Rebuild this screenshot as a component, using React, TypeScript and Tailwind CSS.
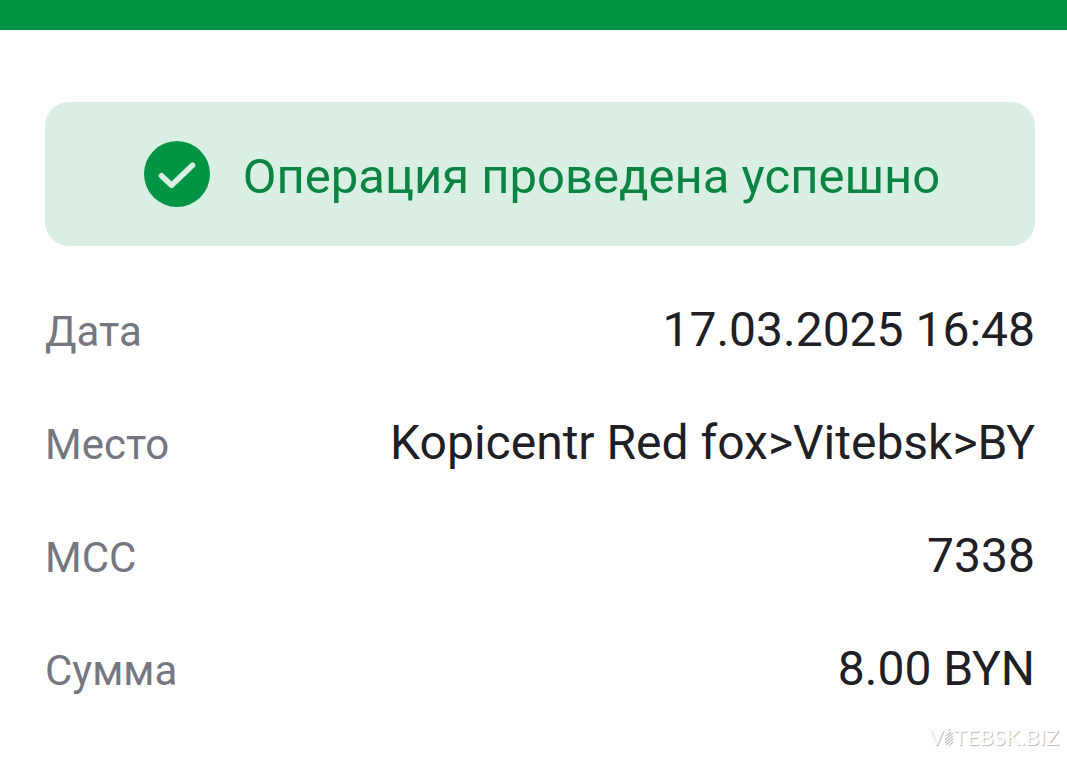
interface DetailRowProps {
  label: string
  value: string
}

const details: DetailRowProps[] = [
  { label: "Дата", value: "17.03.2025 16:48" },
  { label: "Место", value: "Kopicentr Red fox>Vitebsk>BY" },
  { label: "МСС", value: "7338" },
  { label: "Сумма", value: "8.00 BYN" },
]

const SuccessIcon: React.FC = () => (
  <svg viewBox="0 0 66 66" className="size-[66px] shrink-0" aria-hidden="true">
    <circle cx="33" cy="33" r="33" fill="#009444" />
    <path
      d="M17.5 34.8 27.6 44.3 48.5 24.2"
      fill="none"
      stroke="#d9efe3"
      strokeWidth="5.6"
      strokeLinecap="round"
      strokeLinejoin="round"
    />
  </svg>
)

const DetailRow: React.FC<DetailRowProps> = ({ label, value }) => {
  return (
    <div className="flex items-baseline justify-between gap-6">
      <dt className="text-[42px] leading-[56px] text-[#757780]">{label}</dt>
      <dd className="text-right text-[48px] leading-[56px] text-[#1e2025]">{value}</dd>
    </div>
  )
}

export default function App() {
  return (
    <div className="min-h-screen bg-white font-[Roboto,sans-serif]">
      {/* Top bar */}
      <header className="h-[30px] w-full bg-[#009444]"></header>

      <main className="pt-[72px] pr-8 pl-[45px]">
        {/* Operation status */}
        <div role="status" className="flex h-36 items-center justify-center gap-[33px] rounded-3xl bg-[#d9efe3] pl-1">
          <SuccessIcon />
          <p className="pt-[6px] text-[49px] leading-[56px] text-[#0b8443]">Операция проведена успешно</p>
        </div>

        {/* Operation details */}
        <dl className="mt-14 flex flex-col gap-[55px]">
          {details.map((item) => (
            <DetailRow key={item.label} label={item.label} value={item.value} />
          ))}
        </dl>
      </main>

      {/* Site mark */}
      <footer className="mt-6 flex items-center justify-end pr-2 font-[Lato,sans-serif] text-[22px] leading-7 text-white [text-shadow:1px_1px_1px_#b8b8b8]">
        <span>V</span>
        <svg viewBox="0 0 10 20" className="h-5 w-[10px]" fill="none" stroke="#c4c4c4" strokeWidth="1.2" aria-hidden="true">
          <path d="M4 3h3M2 9l5-4M1 13l8-7M1 16l8-7M2 18l7-6M5 19l4-4" />
        </svg>
        <span>TEBSK.BIZ</span>
      </footer>
    </div>
  )
}
